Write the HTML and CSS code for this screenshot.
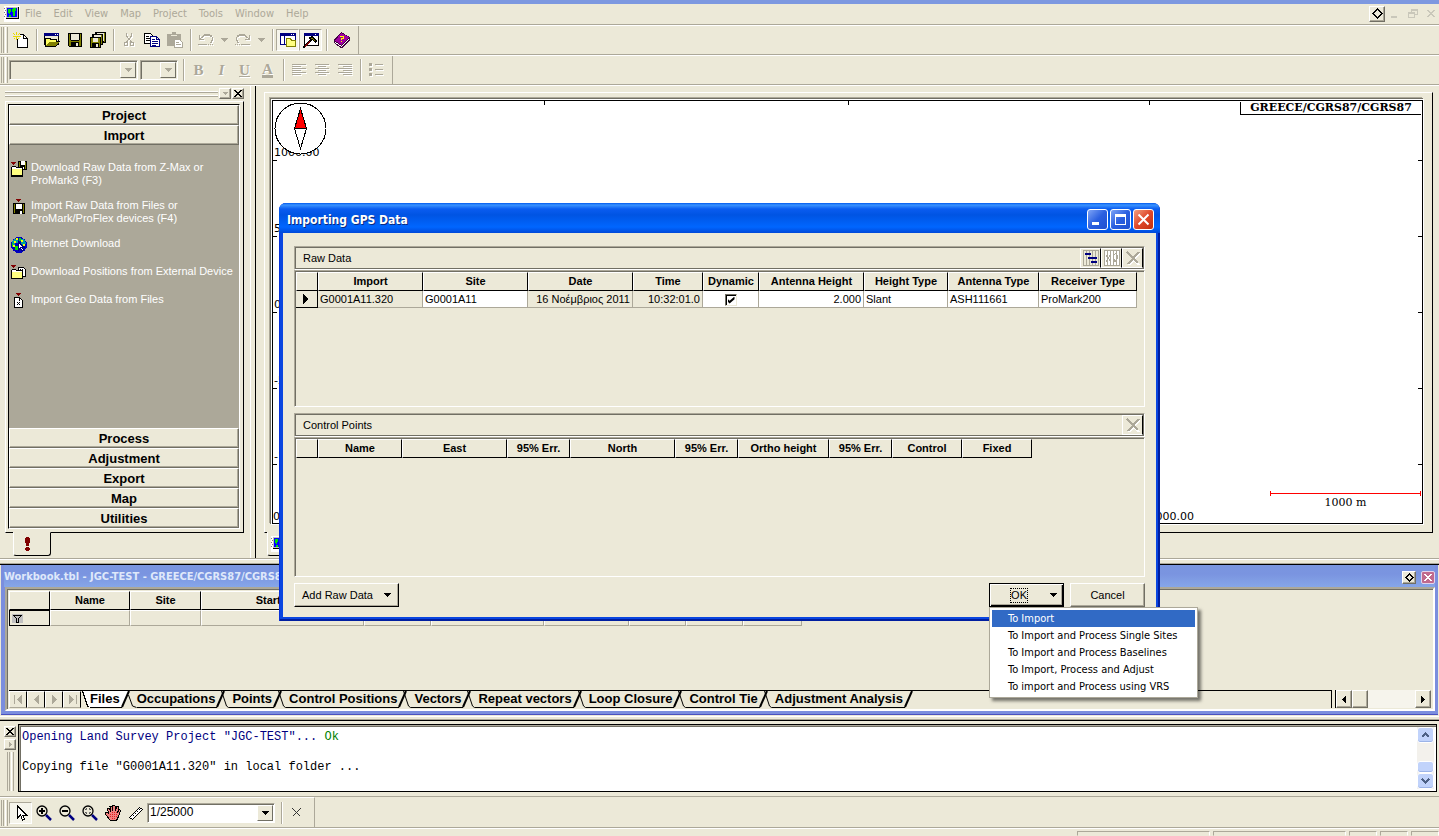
FILE: index.html
```html
<!DOCTYPE html>
<html lang="en">
<head>
  <meta charset="UTF-8" />
  <meta name="viewport" content="width=device-width, initial-scale=1" />
  <title>JGC-TEST</title>
  <link rel="stylesheet" href="styles.css">
</head>
<body>
  <svg class="sprite" aria-hidden="true">
    <symbol id="i-app" viewBox="0 0 16 16">
      <path fill="#fff" d="M0 0h16v16H0z"/>
      <path fill="#808080" d="M0 2h1v1H0zM1 4h1v1H1zM0 6h1v1H0zM1 8h1v1H1zM0 10h1v1H0zM2 2h13v1H2z"/>
      <path fill="#000" d="M2 1h13v12H2z"/>
      <path fill="#c0c0c0" d="M2 1h12v11H2z"/>
      <path fill="#0000ff" d="M3 2h10v9H3z"/>
      <path fill="#00e000" d="M4 3h3v3H6v2H5V7H4zM9 2h3v3h-1v5H9V6H8V3zM5 9h2v2H5z"/>
    </symbol>
    <symbol id="i-floppy" viewBox="0 0 14 14">
      <path fill="#000" d="M0 0h14v14H1L0 13z"/>
      <path fill="#808000" d="M1 1h12v12H1z"/>
      <path fill="#ece9d8" d="M3 1h8v6H3z"/>
      <path fill="#000" d="M2 1h1v6H2zM11 1h1v6h-1zM3 7h8v1H3zM3 9h8v5H3z"/>
      <path fill="#ece9d8" d="M8 10h2v3H8z"/>
    </symbol>
    <symbol id="i-down" viewBox="0 0 7 4"><path fill="currentColor" d="M0 0h7v1H6v1H5v1H4v1H3V3H2V2H1V1H0z"/></symbol>
    <symbol id="i-del" viewBox="0 0 14 14">
      <path fill="none" stroke="#fff" stroke-width="2" d="M2 2l11 12M14 2L3 14"/>
      <path fill="none" stroke="#aca899" stroke-width="2" d="M1 1l11 11M13 1L2 13"/>
    </symbol>
    <symbol id="i-diamond" viewBox="0 0 11 11"><path fill="none" stroke="#000" stroke-width="2" d="M5.500 1L10 5.500 5.500 10 1 5.500z"/></symbol>
    <symbol id="i-zoom" viewBox="0 0 16 16">
      <circle cx="6" cy="6" r="5" fill="#ece9d8" stroke="#000" stroke-width="1.300"/>
      <path stroke="#000080" stroke-width="2.500" d="M10 10l5 5"/>
    </symbol>
    <symbol id="i-closex" viewBox="0 0 8 7"><path fill="currentColor" d="M0 0h2v1h1v1h2V1h1V0h2v1H7v1H6v1H5v1h1v1h1v1h1v1H6V6H5V5H3v1H2v1H0V6h1V5h1V4h1V3H2V2H1V1H0z"/></symbol>
    <symbol id="slant" viewBox="0 0 17 17"><path stroke="#000" stroke-width="2" d="M2 16l7-16"/><path fill="none" stroke="#000" d="M6.500 0l5 15 2 1.500h4M0 16.500h2"/></symbol>
  </svg>

  <div class="title-strip"></div>

  <div class="menubar">
    <svg class="icon16"><use href="#i-app"/></svg>
    <nav class="menus">
      <button>File</button><button>Edit</button><button>View</button><button>Map</button><button>Project</button><button>Tools</button><button>Window</button><button>Help</button>
    </nav>
    <div class="mdi-buttons">
      <button class="mdi raised" aria-label="Float"><svg width="11" height="11"><use href="#i-diamond"/></svg></button>
      <button class="mdi" aria-label="Minimize"><svg width="10" height="10"><path fill="#c9c7ba" d="M1 7h6v2H1z"/></svg></button>
      <button class="mdi" aria-label="Restore"><svg width="10" height="10"><path fill="none" stroke="#c9c7ba" d="M3.500 3V.5h6v5H7M.5 3.500h6v5h-6zM.5 4.500h6M3.500 1.500h6"/></svg></button>
      <button class="mdi" aria-label="Close"><svg width="8" height="7" color="#c9c7ba"><use href="#i-closex"/></svg></button>
    </div>
  </div>

  <div class="toolbar">
    <div class="band">
      <span class="grip"></span>
      <button class="tool" aria-label="New"><svg class="icon16" viewBox="0 0 16 16"><path fill="#fff" stroke="#000" d="M4.500 2.500h6l4 4v9h-10z"/><path fill="none" stroke="#000" d="M10.500 2.500v4h4"/><path fill="#ece9d8" d="M3 1h4v6H3z"/><path fill="#e8d800" d="M3 0h1v3H3zM0 1h1v1H0zM1 2h1v1H1zM6 1h1v1H6zM5 2h1v1H5zM0 4h8v1H0zM3 5h1v3H3zM1 6h1v1H1zM5 6h1v1H5z"/></svg></button>
      <span class="sep"></span>
      <button class="tool" aria-label="Open"><svg class="icon16" viewBox="0 0 16 16"><path fill="#000" d="M0 1h15v12H0z"/><path fill="#000080" d="M0 1h15v3H0z"/><path fill="#fff" d="M11 2h1v1h-1zM13 2h1v1h-1z"/><path fill="#ece9d8" d="M1 4h13v5H1z"/><path fill="#000" d="M1 6h5l1 1h6v2h3l-4 6H1z"/><path fill="#ffff60" d="M2 7h3l1 1h6v2H5l-3 4z"/><path fill="#808000" d="M5 10h10l-3 4H2z"/></svg></button>
      <button class="tool" aria-label="Save"><svg class="icon14"><use href="#i-floppy"/></svg></button>
      <button class="tool" aria-label="Save All"><svg class="icon16" viewBox="0 0 16 16"><path fill="#000" d="M5 0h11v11H5z"/><path fill="#ece9d8" d="M7 1h7v8H7z"/><path fill="#808000" d="M14 1h1v9h-1z"/><path fill="#000" d="M2 2h11v11H2z"/><path fill="#ece9d8" d="M4 3h7v8H4z"/><path fill="#808000" d="M11 3h1v9h-1z"/><path fill="#000" d="M0 5h11v11H0z"/><path fill="#808000" d="M1 6h9v9H1z"/><path fill="#ece9d8" d="M3 6h5v4H3z"/><path fill="#000" d="M2 11h7v4H2z"/><path fill="#ece9d8" d="M6 12h2v3H6z"/></svg></button>
      <span class="sep"></span>
      <button class="tool" disabled aria-label="Cut"><svg class="icon16 emboss" viewBox="0 0 16 16"><path fill="none" stroke="#aca899" d="M5.500 1v3l5 6M10.500 1v3l-5 6"/><circle cx="5" cy="12" r="2" fill="none" stroke="#aca899"/><circle cx="11" cy="12" r="2" fill="none" stroke="#aca899"/></svg></button>
      <button class="tool" aria-label="Copy"><svg class="icon16" viewBox="0 0 16 16"><path fill="#fff" stroke="#000" d="M.5 1.500h6l3 3v7h-9z"/><path fill="#000" d="M2 4h3v1H2zM2 6h5v1H2zM2 8h5v1H2z"/><path fill="#fff" stroke="#000080" d="M6.500 4.500h6l3 3v7h-9zM12.500 4.500v3h3"/><path fill="#000080" d="M8 7h3v1H8zM8 9h6v1H8zM8 11h6v1H8zM8 13h4v1H8z"/></svg></button>
      <button class="tool" disabled aria-label="Paste"><svg class="icon16" viewBox="0 0 16 16"><path fill="#aca899" d="M5 0h4v2h5v12H0V2h5z"/><path fill="#ece9d8" d="M4 3h6v1H4z"/><path fill="#fff" stroke="#aca899" d="M7.500 7.500h5l3 3v5h-8z"/><path fill="#aca899" d="M9 10h3v1H9zM9 12h5v1H9z"/></svg></button>
      <span class="sep"></span>
      <button class="tool" disabled aria-label="Undo"><svg class="icon16 emboss" viewBox="0 0 16 16"><path fill="#aca899" d="M1 3h1v3h1v1h3v1H1zM3 5h1V4h1V3h1V2h6v1h2v2h1v4h-1v2h-2v-1h1V8h1V5h-2V4H6v1H5v1H3zM0 12h9v1H0zM10 12h1v1h-1zM12 12h1v1h-1zM14 12h1v1h-1z"/></svg></button>
      <button class="drop" disabled aria-label="Undo list"><svg class="arrow"><use href="#i-down"/></svg></button>
      <button class="tool" disabled aria-label="Redo"><svg class="icon16 emboss" viewBox="0 0 16 16"><path fill="#aca899" d="M15 3h-1v3h-1v1h-3v1h5zM13 5h-1V4h-1V3h-1V2H4v1H2v2H1v4h1v2h2v-1H3V8H2V5h2V4h6v1h1v1h2zM0 12h1v1H0zM2 12h1v1H2zM4 12h1v1H4zM6 12h9v1H6z"/></svg></button>
      <button class="drop" disabled aria-label="Redo list"><svg class="arrow"><use href="#i-down"/></svg></button>
      <span class="sep"></span>
      <button class="tool pressed" aria-label="Workspace"><svg class="icon16" viewBox="0 0 16 16"><path fill="#000080" d="M0 1h16v12H0z"/><path fill="#fff" d="M1 4h14v8H1z"/><path fill="#fff" d="M11 2h1v1h-1zM13 2h1v1h-1z"/><path fill="#000080" d="M4 4h1v8H4z"/><path fill="#ffff80" stroke="#808000" d="M6.500 6.500h4l1 2h4v6h-9z"/></svg></button>
      <button class="tool pressed" aria-label="Tools"><svg class="icon16" viewBox="0 0 16 16"><path fill="#000" d="M1 1h15v13H1z"/><path fill="#fff" d="M2 4h13v9H2z"/><path fill="#000080" d="M1 1h15v3H1z"/><path fill="#fff" d="M12 2h1v1h-1z"/><path fill="#000" d="M5 6l4-2 5 5-2 2-3-3-8 8H0v-2l7-7z"/><path fill="#808000" d="M7 6h2l3 3v1L9 7z"/><path fill="#800000" d="M1 14l5-5 1 1-5 5z"/></svg></button>
      <span class="sep"></span>
      <button class="tool" aria-label="Help"><svg class="icon16" viewBox="0 0 16 16"><path fill="#400040" d="M7 0l9 5v3l-7 8H7L0 11V8z"/><path fill="#fff" d="M1 10l7 4 7-8v1l-7 8-7-4z"/><path fill="#a000a0" d="M7 1l8 4-7 8-7-4z"/><path fill="#ffff00" d="M6 4h4v3H8v1H7V6h2V5H6zM7 9h1v1H7z"/></svg></button>
    </div>
  </div>

  <div class="toolbar">
    <div class="band">
      <span class="grip"></span>
      <label class="combo combo-font off"><select disabled aria-label="Font"></select><span class="combo-btn"><svg class="arrow"><use href="#i-down"/></svg></span></label>
      <label class="combo combo-size off"><select disabled aria-label="Font size"></select><span class="combo-btn"><svg class="arrow"><use href="#i-down"/></svg></span></label>
      <span class="sep"></span>
      <button class="tool letter" disabled><b>B</b></button>
      <button class="tool letter" disabled><i>I</i></button>
      <button class="tool letter" disabled><u>U</u></button>
      <button class="tool letter fontcolor" disabled><span>A</span></button>
      <span class="sep"></span>
      <button class="tool" disabled aria-label="Align left"><svg class="icon14 emboss" viewBox="0 0 14 14"><path fill="#aca899" d="M0 1h14v1H0zM0 3h9v1H0zM0 5h14v1H0zM0 7h9v1H0zM0 9h14v1H0zM0 11h9v1H0z"/></svg></button>
      <button class="tool" disabled aria-label="Center"><svg class="icon14 emboss" viewBox="0 0 14 14"><path fill="#aca899" d="M0 1h14v1H0zM3 3h8v1H3zM0 5h14v1H0zM3 7h8v1H3zM0 9h14v1H0zM3 11h8v1H3z"/></svg></button>
      <button class="tool" disabled aria-label="Align right"><svg class="icon14 emboss" viewBox="0 0 14 14"><path fill="#aca899" d="M0 1h14v1H0zM5 3h9v1H5zM0 5h14v1H0zM5 7h9v1H5zM0 9h14v1H0zM5 11h9v1H5z"/></svg></button>
      <span class="sep"></span>
      <button class="tool" disabled aria-label="Bullets"><svg class="icon14 emboss" viewBox="0 0 14 14"><path fill="#aca899" d="M0 0h3v3H0zM0 5h3v3H0zM0 10h3v3H0zM6 1h8v1H6zM6 6h8v1H6zM6 11h8v1H6z"/></svg></button>
    </div>
  </div>

  <main class="work">
    <aside class="side">
      <div class="side-top">
        <span class="hgrip"></span>
        <button class="tiny raised" disabled aria-label="Collapse"><svg width="5" height="3"><use href="#i-down"/></svg></button>
        <button class="tiny raised" aria-label="Close panel"><svg width="8" height="7"><use href="#i-closex"/></svg></button>
      </div>
      <div class="side-frame">
        <div class="sections">
          <button class="section">Project</button>
          <button class="section">Import</button>
          <div class="commands">
            <a href="#" class="command">
              <svg class="icon16" viewBox="0 0 16 16"><path fill="#800000" d="M0 1h5v1H4v1H3v1H2V3H1V2H0z"/><path fill="#000" d="M7 0h9v9H7z"/><path fill="#808000" d="M8 1h1v7H8zM14 1h1v7h-1z"/><path fill="#fff" d="M10 0h4v4h-4zM12 6h1v2h-1z"/><path fill="#000" d="M0 6h1V5h4v1h7v10H0z"/><path fill="#ffff80" d="M1 8h10v6H1z"/><path fill="#fff" d="M1 6h4v1h6v1H1z"/></svg>
              <span>Download Raw Data from Z-Max or<br>ProMark3 (F3)</span></a>
            <a href="#" class="command">
              <svg class="icon16" viewBox="0 0 16 16"><path fill="#800000" d="M5 0h5v1H9v1H8v1H7V2H6V1H5z"/><path fill="#000" d="M2 4h12v11H2z"/><path fill="#808000" d="M3 5h1v9H3zM12 5h1v9h-1z"/><path fill="#fff" d="M5 5h6v5H5zM9 12h2v3H9z"/></svg>
              <span>Import Raw Data from Files or<br>ProMark/ProFlex devices (F4)</span></a>
            <a href="#" class="command">
              <svg class="icon16" viewBox="0 0 16 16"><circle cx="8" cy="8" r="8" fill="#0000c0"/><path fill="#00a0a0" d="M3 2h4v4H4v4H1V5zM10 2h3l2 4-3 3-2-3z"/><path fill="#ffff00" d="M5 1h2v2H5zM3 4h2v2H3zM10 3h2v2h-2zM12 7h2v2h-2zM2 8h2v2H2z"/><path fill="#00e000" d="M4 9h3v4H4zM8 1h2v3H8zM1 6h1v3H1z"/><path fill="#fff" stroke="#000080" d="M7.500 5v8l2-2 1.500 3 1.500-1-1.500-2.500h2z"/></svg>
              <span>Internet Download</span></a>
            <a href="#" class="command">
              <svg class="icon16" viewBox="0 0 16 16"><path fill="#800000" d="M0 0h5v1H4v1H3v1H2V2H1V1H0z"/><path fill="#fff" stroke="#000" d="M7.500 2.500h5l2 2v7h-7z"/><path fill="#000" d="M9 4h1v1H9zM11 4h1v1h-1zM10 5h1v1h-1z"/><path fill="#000" d="M0 5h1V4h4v1h7v9H0z"/><path fill="#ffff80" d="M1 7h10v6H1z"/><path fill="#fff" d="M1 5h4v1h6v1H1z"/></svg>
              <span>Download Positions from External Device</span></a>
            <a href="#" class="command">
              <svg class="icon16" viewBox="0 0 16 16"><path fill="#800000" d="M5 0h5v1H9v1H8v1H7V2H6V1H5z"/><path fill="#fff" stroke="#000" d="M3.500 4.500h5l3 3v7h-8z"/><path fill="#000" d="M8 5h1v3H8zM6 9h1v1H6zM8 9h1v1H8zM7 10h1v1H7zM6 11h1v1H6zM8 11h1v1H8z"/></svg>
              <span>Import Geo Data from Files</span></a>
          </div>
          <button class="section">Process</button>
          <button class="section">Adjustment</button>
          <button class="section">Export</button>
          <button class="section">Map</button>
          <button class="section">Utilities</button>
        </div>
      </div>
      <div class="bottom-tab alert-tab"><svg width="5" height="14"><path fill="#800000" d="M1 0h3v1h1v5H4v3H1V6H0V1h1zM1 10h3v1h1v2H4v1H1v-1H0v-2h1z"/></svg></div>
    </aside>

    <section class="map-pane">
      <div class="map-frame">
        <div class="map">
          <i class="tick-v t1"></i><i class="tick-v t2"></i><i class="tick-v t3"></i>
          <i class="tick-h r1"></i><i class="tick-h r2"></i><i class="tick-h r3"></i><i class="tick-h r4"></i><i class="tick-h r5"></i>
          <i class="tick-h right r1"></i><i class="tick-h right r2"></i><i class="tick-h right r3"></i><i class="tick-h right r4"></i><i class="tick-h right r5"></i>
          <span class="axis a1">1000.00</span>
          <span class="axis a2">500.00</span>
          <span class="axis a3">0.00</span>
          <span class="axis a4">-500.00</span>
          <span class="axis a5">-1000.00</span>
          <span class="axis x0">0.00</span>
          <span class="axis x1">2000.00</span>
          <svg class="compass" viewBox="0 0 53 53"><circle cx="26.500" cy="26.500" r="25.500" fill="#fff" stroke="#000"/><path fill="#f00" stroke="#000" d="M26.500 6.500l6 20h-12z"/><path fill="#fff" stroke="#000" d="M26.500 46.500l6-20h-12z"/></svg>
          <span class="datum">GREECE/CGRS87/CGRS87</span>
          <div class="scale"><span class="scale-bar"></span><span>1000 m</span></div>
        </div>
      </div>
      <div class="bottom-tab"><svg class="icon16"><use href="#i-app"/></svg></div>
    </section>
  </main>

  <div class="splitter"></div>

  <section class="workbook">
    <header class="wb-title">
      <span>Workbook.tbl - JGC-TEST - GREECE/CGRS87/CGRS87</span>
      <button class="wb-btn raised" aria-label="Float"><svg width="9" height="9"><use href="#i-diamond"/></svg></button>
      <button class="wb-btn wb-close" aria-label="Close workbook"><svg width="8" height="7" color="#fff"><use href="#i-closex"/></svg></button>
    </header>
    <div class="wb-body">
      <table class="grid wb-grid">
        <colgroup><col class="w41"><col class="w80"><col class="w71"><col class="w163"><col class="w67"><col class="w113"><col class="w85"><col class="w57"><col class="w57"><col class="w59"></colgroup>
        <thead><tr><th></th><th>Name</th><th>Site</th><th>Start Time</th><th></th><th></th><th></th><th></th><th></th><th></th></tr></thead>
        <tbody><tr><td class="mark"><svg width="11" height="9"><path fill="#c0c0c0" d="M0 0h11v9H0z"/><path fill="none" stroke="#000" d="M1.500 1.500h8l-3 3v4h-2v-4z"/></svg></td><td></td><td></td><td></td><td></td><td></td><td></td><td></td><td></td><td></td></tr></tbody>
      </table>
      <div class="wb-bottom">
        <div class="navs">
          <button class="nav" disabled aria-label="First"><svg width="9" height="9"><path fill="#aca899" d="M0 0h1v9H0zM8 0v9L3 4.500z"/></svg></button>
          <button class="nav" disabled aria-label="Previous"><svg width="9" height="9"><path fill="#aca899" d="M7 0v9L2 4.500z"/></svg></button>
          <button class="nav" disabled aria-label="Next"><svg width="9" height="9"><path fill="#aca899" d="M2 0v9l5-4.500z"/></svg></button>
          <button class="nav" disabled aria-label="Last"><svg width="9" height="9"><path fill="#aca899" d="M8 0h1v9H8zM1 0v9l5-4.500z"/></svg></button>
        </div>
        <div class="tabs">
          <svg class="slant-first" viewBox="0 0 9 17"><path fill="#fff" d="M2 0h7v17L7 16z"/><path fill="none" stroke="#000" d="M1.500 0l5 15 2 1.500"/></svg>
          <button class="tab on">Files</button><svg class="slant" viewBox="0 0 17 17"><path fill="#fff" d="M0 0h9L2 16H0z"/><path stroke="#000" stroke-width="2" d="M2 16l7-16"/><path fill="none" stroke="#000" d="M8.500 4l4 11 4 1.500M0 16.500h2"/></svg>
          <button class="tab">Occupations</button><svg class="slant"><use href="#slant"/></svg>
          <button class="tab">Points</button><svg class="slant"><use href="#slant"/></svg>
          <button class="tab">Control Positions</button><svg class="slant"><use href="#slant"/></svg>
          <button class="tab">Vectors</button><svg class="slant"><use href="#slant"/></svg>
          <button class="tab">Repeat vectors</button><svg class="slant"><use href="#slant"/></svg>
          <button class="tab">Loop Closure</button><svg class="slant"><use href="#slant"/></svg>
          <button class="tab">Control Tie</button><svg class="slant"><use href="#slant"/></svg>
          <button class="tab">Adjustment Analysis</button><svg class="slant" viewBox="0 0 17 17"><path stroke="#000" stroke-width="2" d="M2 16l7-16"/><path stroke="#000" d="M0 16.500h2"/></svg>
        </div>
        <div class="hscroll">
          <button class="raised" aria-label="Scroll left"><svg width="4" height="7"><path d="M4 0v7L0 3.500z"/></svg></button>
          <span class="thumb raised"></span>
          <button class="raised" aria-label="Scroll right"><svg width="4" height="7"><path d="M0 0v7l4-3.500z"/></svg></button>
        </div>
      </div>
    </div>
  </section>

  <div class="splitter low"></div>

  <section class="console">
    <div class="console-side">
      <button class="tiny raised" aria-label="Close log"><svg width="8" height="7"><use href="#i-closex"/></svg></button>
      <button class="tiny raised" disabled aria-label="Expand log"><svg width="3" height="5"><path fill="#aca899" d="M0 0v5l3-2.500z"/></svg></button>
      <span class="vgrip"></span>
    </div>
    <div class="log">
      <pre><span class="navy">Opening Land Survey Project "JGC-TEST"... </span><span class="green">Ok</span>

Copying file "G0001A11.320" in local folder ...</pre>
      <div class="vscroll">
        <button aria-label="Scroll up"><svg width="9" height="6"><path fill="none" stroke="#4d6185" stroke-width="2" d="M1 5l3.500-3.500L8 5"/></svg></button>
        <span class="vthumb"></span>
        <button aria-label="Scroll down"><svg width="9" height="6"><path fill="none" stroke="#4d6185" stroke-width="2" d="M1 1l3.500 3.500L8 1"/></svg></button>
      </div>
    </div>
  </section>

  <div class="toolbar map-tools">
    <div class="band">
      <span class="grip"></span>
      <button class="tool pressed" aria-label="Select"><svg class="icon16" viewBox="0 0 16 16"><path fill="#fff" stroke="#000" d="M4.500 1v12l3-3 2 5 2-1-2-4h4z"/></svg></button>
      <button class="tool" aria-label="Zoom in"><svg class="icon16 smooth" viewBox="0 0 16 16"><use href="#i-zoom"/><path fill="#000" d="M5 3h2v6H5zM3 5h6v2H3z"/></svg></button>
      <button class="tool" aria-label="Zoom out"><svg class="icon16 smooth" viewBox="0 0 16 16"><use href="#i-zoom"/><path fill="#000" d="M3 5h6v2H3z"/></svg></button>
      <button class="tool" aria-label="Zoom to fit"><svg class="icon16 smooth" viewBox="0 0 16 16"><use href="#i-zoom"/><path fill="none" stroke="#555" d="M4.500 3v1.500H3M7.500 3v1.500H9M4.500 9V7.500H3M7.500 9V7.500H9"/></svg></button>
      <button class="tool" aria-label="Pan"><svg class="icon16" viewBox="0 0 16 16"><path fill="#f08080" stroke="#000" d="M5.500 15.500l-5-6v-2h2l1 1-1-5h2l1 3-.5-5h2l.5 4 .5-5h2l.5 5 1-4h2l-.5 5 1.500-2 1 1-2 6-2 4z"/><path fill="#e02020" d="M5 9h1v1H5zM7 7h1v1H7zM9 9h1v1H9zM11 7h1v1h-1zM7 11h1v1H7zM9 13h1v1H9zM11 11h1v1h-1zM5 11h1v1H5zM7 9h1v1H7zM9 7h1v1H9zM9 11h1v1H9zM11 9h1v1h-1zM7 13h1v1H7z"/></svg></button>
      <button class="tool" aria-label="Measure"><svg class="icon16" viewBox="0 0 16 16"><path fill="#fff" stroke="#000" d="M1.500 12.500l10-10 3 2-10 10z"/><path fill="#000" d="M5 10h1v1H5zM7 8h1v1H7zM9 6h1v1H9zM11 4h1v1h-1z"/></svg></button>
      <label class="combo combo-scale"><select aria-label="Scale"><option>1/25000</option></select><span class="combo-btn"><svg class="arrow"><use href="#i-down"/></svg></span></label>
      <span class="sep"></span>
      <button class="tool" aria-label="Clear"><svg width="9" height="9"><path stroke="#333" d="M.5.500l8 8M8.500.500l-8 8"/></svg></button>
    </div>
  </div>

  <footer class="status"><span></span><span></span><span class="s"></span><span class="s"></span><span class="s"></span></footer>

  <div class="dialog" role="dialog" aria-labelledby="dlgTitle">
    <header class="dlg-title">
      <h1 id="dlgTitle">Importing GPS Data</h1>
      <button class="cap" aria-label="Minimize dialog"><svg width="13" height="13"><path fill="#fff" d="M1 9h7v3H1z"/></svg></button>
      <button class="cap" aria-label="Maximize dialog"><svg width="13" height="13"><path fill="#fff" d="M1 1h11v11H1zM2 4v7h9V4z" fill-rule="evenodd"/></svg></button>
      <button class="cap cap-close" aria-label="Close dialog"><svg class="smooth" width="13" height="13"><path stroke="#fff" stroke-width="2" d="M1.500 1.500l10 10M11.500 1.500l-10 10"/></svg></button>
    </header>
    <div class="dlg-body">
      <div class="bar">
        <span>Raw Data</span>
        <button class="bar-btn" aria-label="Select columns"><svg width="16" height="16"><path fill="none" stroke="#aca899" d="M.5.500h15v15H.5zM3.500 0v16M6.500 0v16M9.500 0v16M12.500 0v16"/><path fill="#000080" d="M2 3h6v2H2zM5 7h9v2H5zM8 11h6v2H8z"/></svg></button>
        <button class="bar-btn" disabled aria-label="Show graph"><svg width="16" height="16"><path fill="#fff" d="M1 1h15v15H1z"/><path fill="none" stroke="#aca899" d="M.5.500h15v15H.5zM3.500 0v16M6.500 0v16M9.500 0v16M12.500 0v16M2 5l5 7M7 4l-5 8M9 6l3-3 2 5-3 4z"/></svg></button>
        <button class="bar-btn" disabled aria-label="Delete file"><svg class="icon14"><use href="#i-del"/></svg></button>
      </div>
      <div class="well well-raw">
        <table class="grid">
          <colgroup><col class="w22"><col class="w105"><col class="w105"><col class="w105"><col class="w70"><col class="w56"><col class="w105"><col class="w84"><col class="w91"><col class="w98"></colgroup>
          <thead><tr><th></th><th>Import</th><th>Site</th><th>Date</th><th>Time</th><th>Dynamic</th><th>Antenna Height</th><th>Height Type</th><th>Antenna Type</th><th>Receiver Type</th></tr></thead>
          <tbody><tr>
            <td class="mark current"><svg width="6" height="10"><path d="M0 0v10l6-5z"/></svg></td>
            <td>G0001A11.320</td>
            <td class="edit">G0001A11</td>
            <td class="num">16 Νοέμβριος 2011</td>
            <td class="num">10:32:01.0</td>
            <td class="edit mid"><input type="checkbox" class="check" checked aria-label="Dynamic"></td>
            <td class="edit num">2.000</td>
            <td class="edit">Slant</td>
            <td class="edit">ASH111661</td>
            <td class="edit">ProMark200</td>
          </tr></tbody>
        </table>
      </div>
      <div class="bar bar-control">
        <span>Control Points</span>
        <button class="bar-btn" disabled aria-label="Delete point"><svg class="icon14"><use href="#i-del"/></svg></button>
      </div>
      <div class="well well-control">
        <table class="grid">
          <colgroup><col class="w22"><col class="w84"><col class="w105"><col class="w63"><col class="w105"><col class="w63"><col class="w91"><col class="w63"><col class="w70"><col class="w70"></colgroup>
          <thead><tr><th></th><th>Name</th><th>East</th><th>95% Err.</th><th>North</th><th>95% Err.</th><th>Ortho height</th><th>95% Err.</th><th>Control</th><th>Fixed</th></tr></thead>
        </table>
      </div>
      <div class="dlg-buttons">
        <button class="push push-add"><span>Add Raw Data</span><svg class="arrow"><use href="#i-down"/></svg></button>
        <div class="ok-wrap">
          <button class="push push-ok"><span class="focus">OK</span><svg class="arrow"><use href="#i-down"/></svg></button>
          <div class="popup" role="menu">
            <button class="selected" role="menuitem">To Import</button>
            <button role="menuitem">To Import and Process Single Sites</button>
            <button role="menuitem">To Import and Process Baselines</button>
            <button role="menuitem">To Import, Process and Adjust</button>
            <button role="menuitem">To import and Process using VRS</button>
          </div>
        </div>
        <button class="push push-cancel">Cancel</button>
      </div>
    </div>
  </div>
</body>
</html>
```
FILE: styles.css
```css
:root {
  --face: #ece9d8;
  --shadow: #aca899;
  --dark: #716f64;
  --frame: #7b8ede;
  --ui: "Liberation Sans", Arial, sans-serif;
  --tahoma: "DejaVu Sans Condensed", "DejaVu Sans", sans-serif;
}
* {
  box-sizing: border-box;
}
body {
  margin: 0;
  height: 100vh;
  display: flex;
  flex-direction: column;
  background: var(--face);
  color: #000;
  font: 11px/13px var(--ui);
  overflow: hidden;
}
button, select {
  font: inherit;
  color: inherit;
  background: none;
  border: 0;
  padding: 0;
  margin: 0;
}
svg {
  display: block;
  flex: none;
  shape-rendering: crispEdges;
}
.smooth {
  shape-rendering: auto;
}
.sprite {
  display: none;
}
.icon16 {
  width: 16px;
  height: 16px;
}
.icon14 {
  width: 14px;
  height: 14px;
}
.arrow {
  width: 7px;
  height: 4px;
}
.emboss {
  filter: drop-shadow(1px 1px 0 #fff);
}
.raised {
  background: var(--face);
  border: 1px solid;
  border-color: #fff var(--dark) var(--dark) #fff;
  box-shadow: inset -1px -1px 0 var(--shadow);
}

/* menu */
.title-strip {
  height: 4px;
  background: #7d98e0;
}
.menubar {
  height: 22px;
  display: flex;
  align-items: center;
  padding: 0 0 2px 4px;
  border-bottom: 1px solid #fff;
  box-shadow: inset 0 -1px 0 var(--shadow);
  font-family: var(--tahoma);
  color: var(--shadow);
}
.menus {
  display: flex;
  gap: 12px;
  margin-left: 5px;
}
.mdi-buttons {
  display: flex;
  gap: 2px;
  margin-left: auto;
}
.mdi {
  width: 16px;
  height: 16px;
  display: flex;
  align-items: center;
  justify-content: center;
}

/* toolbars */
.toolbar {
  height: 30px;
  border-bottom: 1px solid #fff;
  box-shadow: inset 0 -1px 0 var(--shadow);
  display: flex;
}
.band {
  display: flex;
  align-items: center;
  padding: 0 5px 1px 1px;
  border-right: 1px solid var(--shadow);
}
.grip {
  width: 7px;
  height: 26px;
  margin-right: 1px;
  border: solid;
  border-width: 0 1px;
  border-color: #fff var(--shadow);
  background: linear-gradient(90deg, transparent 1px, var(--shadow) 1px 2px, transparent 2px 3px, #fff 3px 4px, transparent 4px);
}
.sep {
  width: 2px;
  height: 22px;
  margin: 0 2px 0 4px;
  border-left: 1px solid var(--shadow);
  border-right: 1px solid #fff;
}
.tool {
  width: 23px;
  height: 22px;
  display: flex;
  align-items: center;
  justify-content: center;
}
.drop {
  width: 14px;
  height: 22px;
  display: flex;
  align-items: center;
  justify-content: center;
  color: var(--shadow);
}
.pressed {
  border: 1px solid;
  border-color: var(--shadow) #fff #fff var(--shadow);
  background: #f5f4eb;
}
.letter {
  font: 15px/16px "Liberation Serif", serif;
  font-weight: bold;
  color: var(--shadow);
  text-shadow: 1px 1px 0 #fff;
}
.fontcolor span {
  line-height: 12px;
  border-bottom: 3px solid var(--shadow);
}
.combo {
  display: flex;
  height: 20px;
  border: 1px solid;
  border-color: var(--shadow) #fff #fff var(--shadow);
  box-shadow: inset 1px 1px 0 var(--dark);
  padding: 1px;
  margin-right: 2px;
  background: #fff;
}
.combo select {
  flex: 1;
  min-width: 0;
  appearance: none;
  padding-left: 1px;
  opacity: 1;
  font-size: 12px;
  font-family: var(--ui);
}
.combo.off {
  background: var(--face);
}
.combo.off .combo-btn {
  color: var(--shadow);
}
.combo-btn {
  width: 16px;
  display: flex;
  align-items: center;
  justify-content: center;
  border: 1px solid;
  border-color: #fff var(--dark) var(--dark) #fff;
  background: var(--face);
}
.combo-font {
  width: 129px;
}
.combo-size {
  width: 38px;
}
.combo-size + .sep {
  margin-left: 3px;
}
.combo-scale {
  width: 128px;
}

/* side panel */
.work {
  flex: 1;
  min-height: 0;
  display: flex;
}
.side {
  width: 256px;
  display: flex;
  flex-direction: column;
  padding: 2px 11px 0 5px;
  border-right: 1px solid #000;
  background: linear-gradient(#fff, #fff) 250px 0 / 1px 100% no-repeat;
}
.side-top {
  display: flex;
  gap: 1px;
  height: 11px;
}
.hgrip {
  flex: 1;
  margin: 3px 0 2px;
  border: solid;
  border-width: 1px 0;
  border-color: #fff var(--shadow) var(--shadow);
  background: linear-gradient(var(--shadow) 1px, transparent 1px 3px, #fff 3px 4px, transparent 4px);
}
.tiny {
  width: 12px;
  height: 11px;
  display: flex;
  align-items: center;
  justify-content: center;
}
.tiny:disabled {
  color: var(--shadow);
}
.side-frame {
  flex: 1;
  min-height: 0;
  display: flex;
  margin-top: 2px;
  padding: 2px 3px 3px 2px;
  border: 1px solid;
  border-color: #fff #000 #000 #fff;
}
.sections {
  flex: 1;
  display: flex;
  flex-direction: column;
  border: 1px solid;
  border-color: #000 #fff #fff #000;
}
.section {
  height: 20px;
  font-size: 13px;
  font-weight: bold;
  border: 1px solid;
  border-color: #fff var(--dark) var(--dark) #fff;
  box-shadow: inset -1px -1px 0 var(--shadow);
  background: var(--face);
}
.commands {
  flex: 1;
  display: flex;
  flex-direction: column;
  gap: 12px;
  padding: 16px 0 0 2px;
  background: var(--shadow);
}
.command {
  display: flex;
  gap: 4px;
  height: 26px;
  color: #fff;
  text-decoration: none;
  white-space: nowrap;
}
.command:nth-child(n+3) {
  height: 16px;
}
.bottom-tab {
  width: 38px;
  height: 24px;
  margin: -1px 0 2px 8px;
  display: flex;
  align-items: center;
  justify-content: center;
  background: var(--face);
  border: 1px solid;
  border-color: var(--face) #000 #000 #fff;
  border-radius: 0 0 3px 3px;
}
.alert-tab {
  padding-right: 10px;
}

/* map */
.map-pane {
  flex: 1;
  display: flex;
  flex-direction: column;
  padding: 6px 6px 0 8px;
}
.map-pane .bottom-tab {
  justify-content: flex-start;
  margin-left: 3px;
  padding-left: 3px;
}
.map-frame {
  flex: 1;
  display: flex;
  padding: 7px 9px 8px 7px;
  border: 1px solid;
  border-color: #fff #000 #000 #fff;
}
.map {
  flex: 1;
  position: relative;
  background: #fff;
  border: 1px solid #000;
  box-shadow: 0 0 0 1px #fff, -1px -1px 0 1px var(--dark), -2px -2px 0 1px var(--shadow);
  font: 11px/12px "DejaVu Sans", sans-serif;
}
.tick-v {
  position: absolute;
  top: 0;
  width: 1px;
  height: 4px;
  background: #000;
}
.t1 { left: 23.6%; }
.t2 { left: 50%; }
.t3 { left: 76.2%; }
.tick-h {
  position: absolute;
  left: 0;
  width: 4px;
  height: 1px;
  background: #000;
}
.tick-h.right {
  left: auto;
  right: 0;
}
.r1 { top: 14%; }
.r2 { top: 32%; }
.r3 { top: 50%; }
.r4 { top: 68%; }
.r5 { top: 86%; }
.axis {
  position: absolute;
  left: 1px;
  background: #fff;
}
.a1 { top: 11%; }
.a2 { top: 29%; }
.a3 { top: 47%; }
.a4 { top: 65%; }
.a5 { top: 83%; }
.x0 { left: 0; bottom: 0; }
.x1 { left: 76.2%; bottom: 0; }
.compass {
  position: absolute;
  left: 1px;
  top: 1px;
  width: 53px;
  height: 53px;
}
.datum {
  position: absolute;
  right: 1px;
  top: 1px;
  width: 181px;
  text-align: center;
  border: solid #000;
  border-width: 0 0 1px 1px;
  font: bold 11px/12px "DejaVu Serif", serif;
}
.scale {
  position: absolute;
  right: 1px;
  bottom: 14px;
  width: 151px;
  display: flex;
  flex-direction: column;
  align-items: center;
  font: 11px/13px "DejaVu Serif", serif;
}
.scale-bar {
  width: 100%;
  height: 5px;
  border: solid #f00;
  border-width: 0 1px;
  background: linear-gradient(#f00, #f00) 0 2px / 100% 1px no-repeat;
}

/* workbook */
.splitter {
  height: 7px;
  border-top: 1px solid var(--shadow);
  border-bottom: 1px solid #000;
  box-shadow: inset 0 1px 0 #fff, inset 0 -1px 0 var(--shadow);
}
.splitter.low {
  height: 6px;
  border-top-color: var(--face);
}
.workbook {
  height: 150px;
  display: flex;
  flex-direction: column;
  padding: 0 3px 3px 4px;
  margin: 0 1px;
  background: var(--frame);
  border-bottom: 1px solid #4a52c0;
}
.wb-title {
  height: 22px;
  display: flex;
  align-items: center;
  gap: 5px;
  padding-top: 2px;
  margin-left: -1px;
  background: linear-gradient(#7a96df, #7a94e0 40%, #86a6e8);
  color: #dfe8fa;
  font: bold 11px/14px var(--tahoma);
}
.wb-title span {
  flex: 1;
}
.wb-btn {
  width: 14px;
  height: 13px;
  display: flex;
  align-items: center;
  justify-content: center;
}
.wb-close {
  background: #c06a8e;
  border: 1px solid #e4d4ec;
  border-radius: 2px;
}
.wb-body {
  flex: 1;
  display: flex;
  flex-direction: column;
  justify-content: space-between;
  padding: 2px 2px 1px;
  background: var(--face);
  border: 2px solid;
  border-color: var(--shadow) #fff #fff var(--shadow);
  box-shadow: inset 1px 1px 0 var(--dark);
}
.grid {
  table-layout: fixed;
  width: 0;
  border-collapse: separate;
  border-spacing: 0;
}
.grid th, .grid td {
  padding: 0 2px;
  white-space: nowrap;
  overflow: hidden;
}
.grid th {
  height: 19px;
  border: 1px solid;
  border-color: #fff #000 #000 #fff;
  text-align: center;
}
.grid td {
  height: 17px;
  border: solid var(--shadow);
  border-width: 0 1px 1px 0;
}
.grid .edit {
  background: #fff;
}
.grid .num {
  text-align: right;
}
.grid .mid {
  text-align: center;
}
.grid .mark {
  border-color: #000;
}
.grid .current {
  padding-left: 7px;
}
.wb-grid td {
  height: 16px;
  border: 1px solid;
  border-color: #fff var(--shadow) var(--shadow) #fff;
}
.w22 { width: 22px; }
.w41 { width: 41px; }
.w56 { width: 56px; }
.w57 { width: 57px; }
.w59 { width: 59px; }
.w63 { width: 63px; }
.w67 { width: 67px; }
.w70 { width: 70px; }
.w71 { width: 71px; }
.w80 { width: 80px; }
.w84 { width: 84px; }
.w85 { width: 85px; }
.w91 { width: 91px; }
.w98 { width: 98px; }
.w105 { width: 105px; }
.w113 { width: 113px; }
.w163 { width: 163px; }
.wb-bottom {
  display: flex;
  height: 18px;
}
.navs {
  display: flex;
  border-top: 1px solid #000;
}
.nav {
  width: 18px;
  display: flex;
  align-items: center;
  justify-content: center;
  border: 1px solid;
  border-color: #fff #000 var(--shadow) #fff;
}
.tabs {
  flex: 1;
  display: flex;
  border-top: 1px solid #000;
  border-right: 1px solid #000;
  margin-right: 3px;
}
.tab {
  font-size: 13px;
  line-height: 14px;
  font-weight: bold;
  border-bottom: 1px solid #000;
}
.tab.on {
  background: #fff;
}
.slant {
  width: 17px;
  height: 17px;
  shape-rendering: auto;
}
.slant-first {
  width: 9px;
  height: 17px;
}
.hscroll {
  display: flex;
  width: 96px;
  border-left: 1px solid #000;
  background: #f6f4ec;
}
.hscroll button {
  width: 16px;
  display: flex;
  align-items: center;
  justify-content: center;
}
.thumb {
  width: 16px;
  margin-right: auto;
}

/* log */
.console {
  display: flex;
  height: 75px;
  padding: 3px 2px 4px 4px;
}
.console-side {
  width: 14px;
  display: flex;
  flex-direction: column;
  gap: 2px;
  padding-top: 2px;
}
.console-side .tiny {
  flex: none;
}
.vgrip {
  flex: 1;
  width: 7px;
  margin: 0 3px 1px;
  border: solid;
  border-width: 0 1px;
  border-color: #fff var(--shadow);
  background: linear-gradient(90deg, transparent 1px, var(--shadow) 1px 2px, transparent 2px 3px, #fff 3px 4px, transparent 4px);
}
.log {
  flex: 1;
  display: flex;
  padding: 2px;
  background: #fff;
  border: 1px solid #000;
  box-shadow: inset 1px 1px 0 var(--shadow), inset 2px 2px 0 var(--dark);
}
.log pre {
  flex: 1;
  margin: 0;
  padding: 3px 1px;
  font: 12px/15px "Liberation Mono", "Courier New", monospace;
}
.navy {
  color: #000080;
}
.green {
  color: #008000;
}
.vscroll {
  width: 17px;
  display: flex;
  flex-direction: column;
  background: #f3f1ec;
}
.vscroll button, .vthumb {
  height: 16px;
  display: flex;
  align-items: center;
  justify-content: center;
  border: 1px solid #fff;
  border-radius: 3px;
  background: #c1d3fb;
  box-shadow: inset 0 -1px 0 #9cb4e8;
}
.vthumb {
  height: 12px;
  margin-top: auto;
}
.map-tools {
  height: 33px;
  border-top: 1px solid var(--shadow);
}
.map-tools .band {
  border-top: 1px solid #fff;
  padding-right: 6px;
}
.status {
  height: 7px;
  display: flex;
  justify-content: flex-end;
  gap: 3px;
  padding-top: 2px;
}
.status span {
  width: 133px;
  border: 1px solid;
  border-color: var(--shadow) #fff transparent var(--shadow);
}
.status .s {
  width: 28px;
}

/* dialog */
.dialog {
  position: absolute;
  left: 279px;
  right: 279px;
  top: 203px;
  padding: 0 4px 4px;
  border-radius: 7px 7px 0 0;
  background: #0a46e0;
  box-shadow: inset 1px 0 0 #0831d9, inset -2px -2px 0 #001ea0;
}
.dlg-title {
  height: 30px;
  display: flex;
  align-items: center;
  gap: 2px;
  margin: 0 -4px;
  padding: 3px 6px 0 8px;
  border-radius: 7px 7px 0 0;
  background: linear-gradient(#0058ee, #3a93ff 2px, #0a5cf0 6px, #0054e3 12px, #0066ff 24px, #0048d8);
}
.dlg-title h1 {
  flex: 1;
  margin: 0;
  color: #fff;
  font: bold 12px/16px var(--tahoma);
  text-shadow: 1px 1px 0 #0a2a80;
}
.cap {
  width: 21px;
  height: 21px;
  display: flex;
  align-items: center;
  justify-content: center;
  border: 1px solid #fff;
  border-radius: 3px;
  background: linear-gradient(135deg, #7ea4f6, #2a5fe0 50%, #2050d0);
}
.cap-close {
  background: linear-gradient(135deg, #f0a080, #e0482a 50%, #c03010);
}
.dlg-body {
  padding: 13px 11px 10px;
  background: var(--face);
}
.bar {
  height: 24px;
  display: flex;
  align-items: center;
  padding: 0 1px 0 8px;
  border: 1px solid;
  border-color: var(--shadow) #fff #fff var(--shadow);
  box-shadow: inset 0 0 0 1px var(--dark);
}
.bar span {
  flex: 1;
}
.bar-btn {
  width: 21px;
  height: 20px;
  display: flex;
  align-items: center;
  justify-content: center;
  border: 1px solid;
  border-color: #fff #000 #fff #fff;
}
.well {
  padding: 1px;
  border: 1px solid;
  border-color: var(--shadow) #fff #fff var(--shadow);
  box-shadow: inset 1px 1px 0 var(--dark);
}
.well-raw {
  height: 137px;
}
.bar-control {
  margin-top: 6px;
}
.well-control {
  height: 140px;
}
.check {
  appearance: none;
  display: inline-block;
  vertical-align: middle;
  width: 12px;
  height: 12px;
  margin: 0;
  border: 1px solid;
  border-color: var(--dark) var(--face) var(--face) var(--dark);
  box-shadow: inset 1px 1px 0 #000;
  background: #fff;
}
.check:checked::before {
  content: "";
  display: block;
  width: 7px;
  height: 7px;
  margin: 2px;
  background: #000;
  clip-path: polygon(0 30%, 30% 60%, 100% 0, 100% 40%, 30% 100%, 0 70%);
}
.dlg-buttons {
  display: flex;
  align-items: center;
  margin-top: 6px;
}
.push {
  height: 24px;
  display: flex;
  align-items: center;
  justify-content: center;
  background: var(--face);
  border: 1px solid;
  border-color: #fff #000 #000 #fff;
  box-shadow: inset -1px -1px 0 var(--shadow);
}
.push-add {
  width: 105px;
  gap: 11px;
  margin-right: auto;
}
.ok-wrap {
  position: relative;
}
.push-ok {
  width: 75px;
  justify-content: flex-end;
  gap: 23px;
  padding-right: 6px;
  border: 1px solid #000;
  box-shadow: inset 1px 1px 0 #fff, inset -1px -1px 0 #000, inset -2px -2px 0 var(--shadow);
}
.focus {
  outline: 1px dotted #000;
}
.push-cancel {
  width: 75px;
  margin-left: 6px;
  border-color: #fff var(--dark) var(--dark) #fff;
}
.popup {
  position: absolute;
  left: 0;
  top: 100%;
  z-index: 2;
  width: 209px;
  display: flex;
  flex-direction: column;
  padding: 2px;
  background: #fff;
  border: 1px solid var(--shadow);
  box-shadow: 3px 3px 3px rgba(0, 0, 0, 0.5);
  font-family: var(--tahoma);
}
.popup button {
  height: 17px;
  padding-left: 16px;
  text-align: left;
  white-space: nowrap;
}
.popup .selected {
  background: #316ac5;
  color: #fff;
}
```
